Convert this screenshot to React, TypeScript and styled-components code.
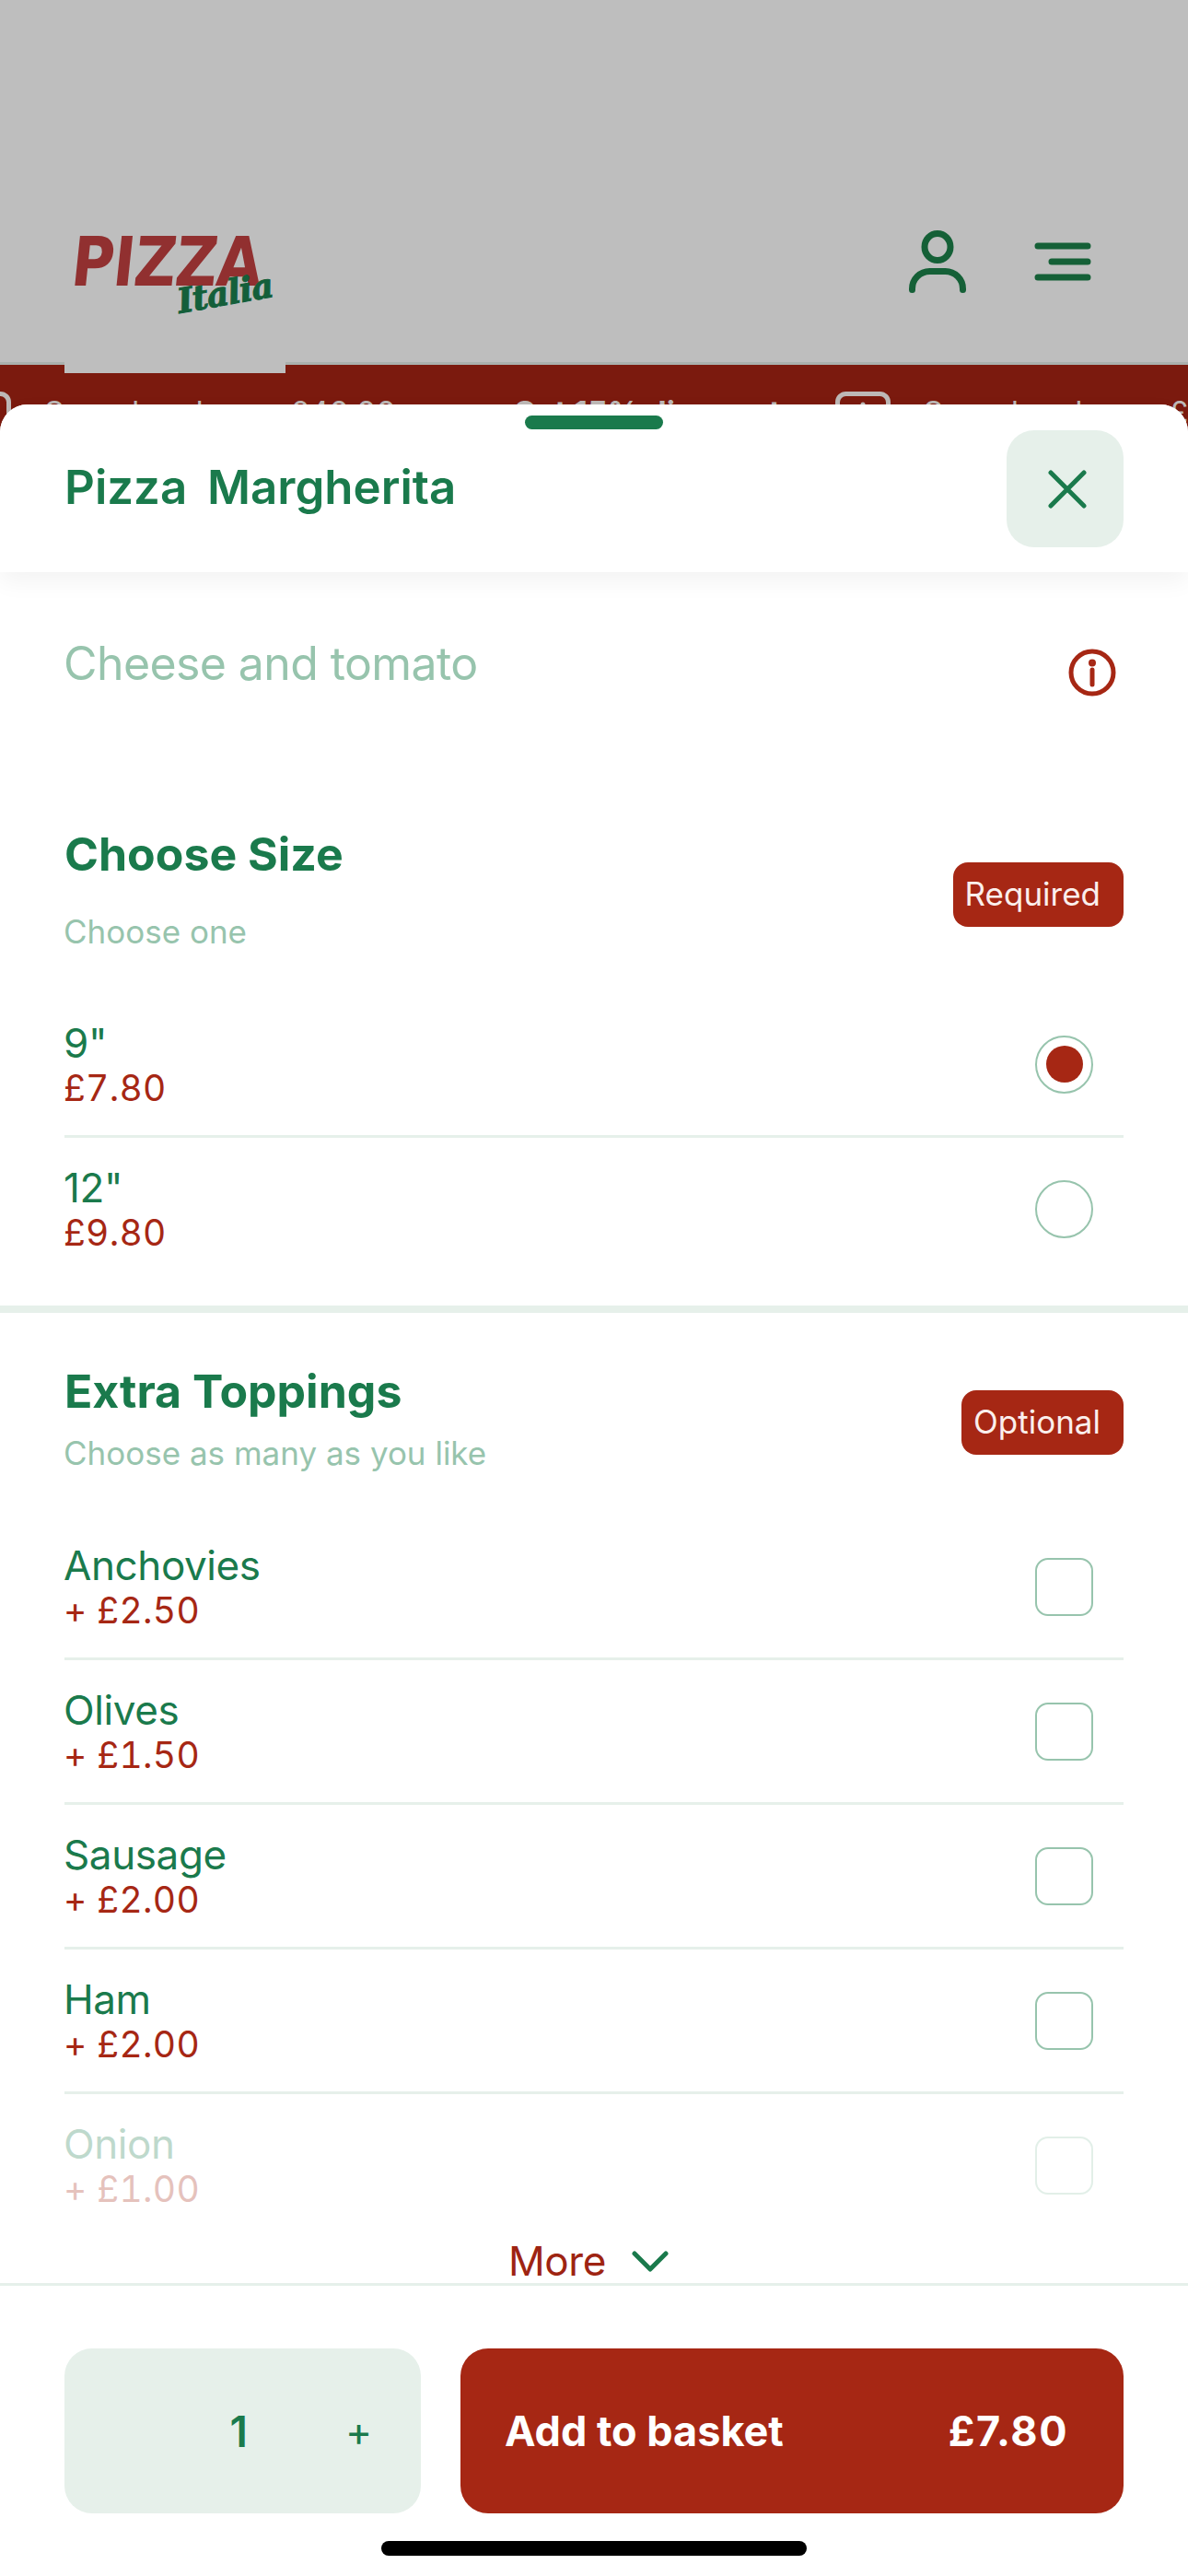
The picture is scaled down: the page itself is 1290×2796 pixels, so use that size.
import React from "react";
import styled, { createGlobalStyle } from "styled-components";

const GREEN = "#1a7a4c";
const RED = "#a62714";
const PALE = "#e6f0ea";
const MUTED = "#97c4ad";

const Global = createGlobalStyle`
  html, body { margin: 0; padding: 0; background: #fff; }
  * { box-sizing: border-box; }
  body { font-family: Inter, "Liberation Sans", sans-serif; }
`;

const Page = styled.div`
  position: relative;
  width: 1290px;
  height: 2796px;
  overflow: hidden;
  background: #7b1a0e;
`;

const TopBar = styled.header`
  height: 396px;
  background: #bebebe;
  border-bottom: 3px solid #aab0ad;
  display: flex;
  align-items: flex-start;
  justify-content: space-between;
  padding: 0 105px 0 70px;
`;

const LogoTab = styled.div`
  position: relative;
  width: 240px;
  height: 405px;
  background: #bebebe;
  flex: none;
`;

const LogoMain = styled.span`
  position: absolute;
  left: 12px;
  top: 247px;
  font: 700 74px/1 "DejaVu Sans", sans-serif;
  letter-spacing: -1px;
  color: #913030;
  transform-origin: left top;
  transform: scaleX(0.853) skewX(-7deg);
`;

const LogoSub = styled.span`
  position: absolute;
  left: 122px;
  top: 300px;
  font: italic 700 37px/1 "DejaVu Serif", serif;
  letter-spacing: -1px;
  color: #145f3a;
  -webkit-text-stroke: 1px #145f3a;
  transform: rotate(-10deg);
`;

const TopIcons = styled.div`
  display: flex;
  align-items: center;
  gap: 74px;
  padding-top: 250px;
`;

const Banner = styled.div`
  display: flex;
  align-items: flex-start;
  white-space: nowrap;
  margin-left: -48px;
  padding-top: 29px;
  font-size: 34px;
  line-height: 41px;
  color: #bdb8b6;
`;

const BannerIcon = styled.svg`
  flex: none;
  margin-right: 36px;
`;

const BannerText = styled.span<{ $bold?: boolean; $gap: number }>`
  flex: none;
  margin-top: 2px;
  margin-right: ${(p) => p.$gap}px;
  font-weight: ${(p) => (p.$bold ? 700 : 400)};
`;

const Sheet = styled.section`
  position: absolute;
  left: 0;
  right: 0;
  top: 439px;
  bottom: 0;
  display: flex;
  flex-direction: column;
  background: #fff;
  border-radius: 30px 30px 0 0;
`;

const Handle = styled.div`
  position: absolute;
  left: 570px;
  top: 12px;
  width: 150px;
  height: 15px;
  border-radius: 8px;
  background: ${GREEN};
  z-index: 2;
`;

const SheetHeader = styled.div`
  flex: none;
  height: 182px;
  display: flex;
  align-items: flex-start;
  justify-content: space-between;
  padding: 28px 70px 0;
  background: #fff;
  border-radius: 30px 30px 0 0;
  box-shadow: 0 10px 26px rgba(0, 0, 0, 0.05);
  position: relative;
  z-index: 1;
`;

const Title = styled.h1`
  margin: 32px 0 0;
  font-size: 51px;
  line-height: 60px;
  font-weight: 600;
  word-spacing: -2px;
  color: ${GREEN};
  white-space: pre;
`;

const CloseButton = styled.button`
  width: 127px;
  height: 127px;
  border: 0;
  padding: 0 0 0 4px;
  border-radius: 30px;
  background: ${PALE};
  display: flex;
  align-items: center;
  justify-content: center;
`;

const Body = styled.div`
  flex: 1;
  min-height: 0;
  display: flex;
  flex-direction: column;
`;

const Description = styled.div`
  display: flex;
  align-items: flex-start;
  justify-content: space-between;
  padding: 69px 76px 0 70px;
  height: 240px;
`;

const DescText = styled.p`
  margin: 0 0 0 -1px;
  font-size: 50px;
  line-height: 60px;
  letter-spacing: -0.6px;
  color: ${MUTED};
`;

const InfoIcon = styled.svg`
  margin-top: 12px;
`;

const Section = styled.div<{ $top: number; $bottom: number; $divider?: boolean }>`
  padding: ${(p) => p.$top}px 70px ${(p) => p.$bottom}px;
  border-top: ${(p) => (p.$divider ? `8px solid ${PALE}` : "0")};
`;

const SectionHead = styled.div<{ $h: number }>`
  display: flex;
  align-items: center;
  justify-content: space-between;
  height: ${(p) => p.$h}px;
`;

const HeadText = styled.div<{ $lift: number }>`
  padding-bottom: ${(p) => p.$lift}px;
`;

const SectionTitle = styled.h2`
  margin: 0;
  font-size: 50px;
  line-height: 60px;
  font-weight: 700;
  color: ${GREEN};
`;

const SectionSub = styled.p<{ $gap: number }>`
  margin: ${(p) => p.$gap}px 0 0 -1px;
  font-size: 35px;
  line-height: 41px;
  color: ${MUTED};
`;

const Badge = styled.span<{ $drop: number }>`
  margin-top: ${(p) => p.$drop}px;
  background: ${RED};
  color: #fbefec;
  font-size: 35px;
  line-height: 45px;
  padding: 12px 25px 13px 13px;
  border-radius: 16px;
`;

const Row = styled.div<{ $last?: boolean; $faded?: boolean }>`
  height: 157px;
  display: flex;
  align-items: center;
  justify-content: space-between;
  border-bottom: 3px solid ${(p) => (p.$last ? "transparent" : PALE)};
  padding-right: 33px;
  opacity: ${(p) => (p.$faded ? 0.28 : 1)};
`;

const RowText = styled.div`
  display: flex;
  flex-direction: column;
  margin-left: -1px;
`;

const RowName = styled.span`
  font-size: 44px;
  line-height: 52px;
  letter-spacing: -0.4px;
  color: ${GREEN};
`;

const RowPrice = styled.span`
  font-size: 39px;
  line-height: 46px;
  letter-spacing: 0.3px;
  font-variant-numeric: tabular-nums;
  color: ${RED};
`;

const Radio = styled.span<{ $on?: boolean }>`
  width: 63px;
  height: 63px;
  border-radius: 50%;
  border: 2px solid ${MUTED};
  display: flex;
  align-items: center;
  justify-content: center;
  &::after {
    content: "";
    display: ${(p) => (p.$on ? "block" : "none")};
    width: 40px;
    height: 40px;
    border-radius: 50%;
    background: ${RED};
  }
`;

const Check = styled.span`
  width: 63px;
  height: 63px;
  border-radius: 14px;
  border: 2px solid ${MUTED};
`;

const More = styled.div`
  flex: 1;
  display: flex;
  align-items: center;
  justify-content: center;
  gap: 28px;
  padding-right: 12px;
  font-size: 44px;
  line-height: 47px;
  letter-spacing: -0.4px;
  color: #9e2412;
`;

const Footer = styled.footer`
  flex: none;
  height: 318px;
  border-top: 3px solid ${PALE};
  padding: 68px 70px 0;
  display: flex;
  gap: 43px;
  align-items: flex-start;
`;

const Qty = styled.div`
  width: 387px;
  height: 179px;
  border-radius: 30px;
  background: ${PALE};
  color: ${GREEN};
  display: flex;
  align-items: center;
  justify-content: flex-end;
  padding-right: 53px;
  gap: 106px;
`;

const QtyValue = styled.span`
  font-size: 46px;
  font-weight: 600;
`;

const QtyPlus = styled.span`
  font-size: 44px;
`;

const AddButton = styled.button`
  flex: 1;
  height: 179px;
  border: 0;
  border-radius: 30px;
  background: ${RED};
  color: #fff;
  display: flex;
  align-items: center;
  justify-content: space-between;
  padding: 0 60px 0 48px;
  font: 700 45px/54px Inter, sans-serif;
`;

const AddPrice = styled.span`
  letter-spacing: 1.5px;
`;

const HomeBar = styled.div`
  position: absolute;
  left: 414px;
  top: 2319px;
  width: 462px;
  height: 16px;
  border-radius: 8px;
  background: #000;
`;

const TicketIcon = () => (
  <BannerIcon width="60" height="60" viewBox="0 0 60 60" fill="none" stroke="#bdb8b6" strokeWidth="5" strokeLinecap="round">
    <rect x="2.5" y="2.5" width="55" height="55" rx="9" />
    <path d="M30 14v32M16 30h28" />
  </BannerIcon>
);

const sizes = [
  { name: '9"', price: "£7.80", on: true },
  { name: '12"', price: "£9.80", on: false },
];

const toppings = [
  { name: "Anchovies", price: "+ £2.50" },
  { name: "Olives", price: "+ £1.50" },
  { name: "Sausage", price: "+ £2.00" },
  { name: "Ham", price: "+ £2.00" },
  { name: "Onion", price: "+ £1.00" },
];

export default function App() {
  return (
    <Page>
      <Global />
      <TopBar>
        <LogoTab>
          <LogoMain>PIZZA</LogoMain>
          <LogoSub>Italia</LogoSub>
        </LogoTab>
        <TopIcons>
          <svg width="62" height="68" viewBox="0 0 62 68" fill="none" stroke="#156037" strokeWidth="7" strokeLinecap="round">
            <ellipse cx="31" cy="18" rx="14" ry="14.5" />
            <path d="M3.5 64.5v-1a19 19 0 0 1 19-19h17a19 19 0 0 1 19 19v1" />
          </svg>
          <svg width="62" height="42" viewBox="0 0 62 42" fill="none" stroke="#156037" strokeWidth="7" strokeLinecap="round">
            <path d="M4 4h54M19 21h39M4 38h54" />
          </svg>
        </TopIcons>
      </TopBar>
      <Banner>
        <TicketIcon />
        <BannerText $gap={127}>Spend and save £40.00</BannerText>
        <BannerText $bold $gap={59}>Get 15% discount</BannerText>
        <TicketIcon />
        <BannerText $gap={127}>Spend and save £40.00</BannerText>
      </Banner>
      <Sheet>
        <Handle />
        <SheetHeader>
          <Title>Pizza  Margherita</Title>
          <CloseButton aria-label="Close">
            <svg width="42" height="42" viewBox="0 0 42 42" fill="none" stroke={GREEN} strokeWidth="5" strokeLinecap="round">
              <path d="M3 3l36 36M39 3L3 39" />
            </svg>
          </CloseButton>
        </SheetHeader>
        <Body>
          <Description>
            <DescText>Cheese and tomato</DescText>
            <InfoIcon width="56" height="56" viewBox="0 0 56 56" fill="none" stroke={RED} strokeWidth="5" strokeLinecap="round">
              <circle cx="28" cy="28" r="23" />
              <path d="M28 25v16" />
              <circle cx="28" cy="17.5" r="1.5" fill={RED} />
            </InfoIcon>
          </Description>
          <Section $top={0} $bottom={25}>
            <SectionHead $h={217}>
              <HeadText $lift={10}>
                <SectionTitle>Choose Size</SectionTitle>
                <SectionSub $gap={34}>Choose one</SectionSub>
              </HeadText>
              <Badge $drop={2}>Required</Badge>
            </SectionHead>
            {sizes.map((s, i) => (
              <Row key={s.name} $last={i === sizes.length - 1}>
                <RowText>
                  <RowName>{s.name}</RowName>
                  <RowPrice>{s.price}</RowPrice>
                </RowText>
                <Radio $on={s.on} />
              </Row>
            ))}
          </Section>
          <Section $divider $top={7} $bottom={0}>
            <SectionHead $h={213}>
              <HeadText $lift={0}>
                <SectionTitle>Extra Toppings</SectionTitle>
                <SectionSub $gap={17}>Choose as many as you like</SectionSub>
              </HeadText>
              <Badge $drop={10}>Optional</Badge>
            </SectionHead>
            {toppings.map((t, i) => (
              <Row key={t.name} $last={i === toppings.length - 1} $faded={i === toppings.length - 1}>
                <RowText>
                  <RowName>{t.name}</RowName>
                  <RowPrice>{t.price}</RowPrice>
                </RowText>
                <Check />
              </Row>
            ))}
          </Section>
          <More>
            More
            <svg width="40" height="24" viewBox="0 0 40 24" fill="none" stroke={GREEN} strokeWidth="5" strokeLinecap="round" strokeLinejoin="round">
              <path d="M3 4l17 17L37 4" />
            </svg>
          </More>
        </Body>
        <Footer>
          <Qty>
            <QtyValue>1</QtyValue>
            <QtyPlus>+</QtyPlus>
          </Qty>
          <AddButton>
            <span>Add to basket</span>
            <AddPrice>£7.80</AddPrice>
          </AddButton>
        </Footer>
        <HomeBar />
      </Sheet>
    </Page>
  );
}
